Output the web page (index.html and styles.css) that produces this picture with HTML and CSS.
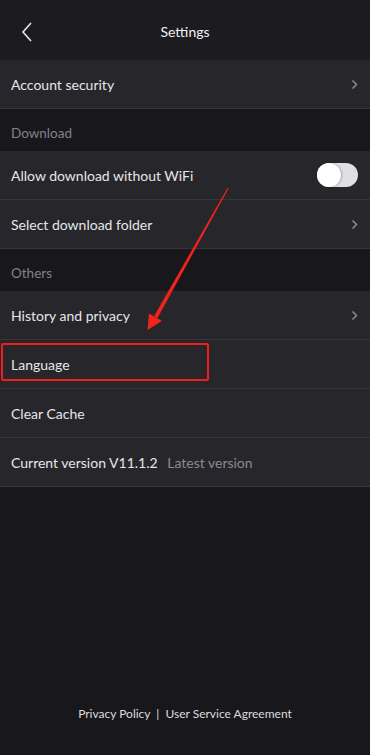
FILE: index.html
```html
<!DOCTYPE html>
<html lang="en">
<head>
  <meta charset="UTF-8" />
  <meta name="viewport" content="width=device-width, initial-scale=1.0"/>
  <title>Settings</title>
  <link rel="stylesheet" href="styles.css">
</head>
<body>
  <div class="page">
    <header class="topbar">
      <span class="back">
        <svg width="12" height="20" viewBox="0 0 12 20"><path d="M10 1 L2 10 L10 19" fill="none" stroke="#e6e6e8" stroke-width="1.6"/></svg>
      </span>
      <h1>Settings</h1>
    </header>

    <div class="row">
      <span>Account security</span>
      <svg class="chev" width="7" height="11" viewBox="0 0 7 11"><path d="M1.5 1.5 L5.5 5.5 L1.5 9.5" fill="none" stroke="#8e8d92" stroke-width="1.5"/></svg>
    </div>

    <div class="section">Download</div>
    <div class="row">
      <span>Allow download without WiFi</span>
      <span class="toggle"><span class="knob"></span></span>
    </div>
    <div class="row">
      <span>Select download folder</span>
      <svg class="chev" width="7" height="11" viewBox="0 0 7 11"><path d="M1.5 1.5 L5.5 5.5 L1.5 9.5" fill="none" stroke="#8e8d92" stroke-width="1.5"/></svg>
    </div>

    <div class="section">Others</div>
    <div class="row">
      <span>History and privacy</span>
      <svg class="chev" width="7" height="11" viewBox="0 0 7 11"><path d="M1.5 1.5 L5.5 5.5 L1.5 9.5" fill="none" stroke="#8e8d92" stroke-width="1.5"/></svg>
    </div>
    <div class="row highlight">
      <span>Language</span>
    </div>
    <div class="row">
      <span>Clear Cache</span>
    </div>
    <div class="row">
      <span>Current version V11.1.2 <span class="muted">Latest version</span></span>
    </div>

    <footer class="footer">
      Privacy Policy <span class="sep">|</span> User Service Agreement
    </footer>

    <svg class="arrow" width="370" height="340" viewBox="0 0 370 340">
      <polygon points="227.5,188 228.5,188.6 157.5,318 154,316.2" fill="#f2221c"/>
      <polygon points="147.5,330 149,313.5 162,321" fill="#f2221c"/>
    </svg>
  </div>
</body>
</html>
```

FILE: styles.css
```css
body {
  margin: 0;
  background: #18171c;
  font-family: 'Lato', 'Noto Sans', sans-serif;
  color: #e6e6e8;
}

.page {
  position: relative;
  width: 370px;
  height: 755px;
  display: flex;
  flex-direction: column;
}

.topbar {
  height: 60px;
  flex-shrink: 0;
  background: #1c1b20;
  display: flex;
  align-items: center;
  justify-content: center;
  position: relative;
}

.topbar h1 {
  margin: 2px 0 0;
  font-size: 14px;
  font-weight: 400;
  color: #f0f0f2;
}

.back {
  position: absolute;
  left: 21px;
  top: 22px;
  display: flex;
}

.row {
  height: 48px;
  flex-shrink: 0;
  background: #27262b;
  border-bottom: 1px solid #36353a;
  display: flex;
  align-items: center;
  justify-content: space-between;
  padding: 0 11px;
  font-size: 14px;
  position: relative;
}

.section {
  height: 42px;
  flex-shrink: 0;
  box-sizing: border-box;
  padding: 6px 11px 0;
  display: flex;
  align-items: center;
  font-size: 13.5px;
  color: #838288;
}

.chev {
  margin-right: 1px;
}

.muted {
  color: #8b8a90;
  margin-left: 6px;
}

.toggle {
  width: 41px;
  height: 24px;
  border-radius: 12px;
  background: #e0e0e2;
  position: relative;
  margin-right: 1px;
}

.knob {
  position: absolute;
  left: 0;
  top: 0;
  width: 24px;
  height: 24px;
  border-radius: 50%;
  background: #ffffff;
  box-shadow: 1px 0 2px rgba(0, 0, 0, 0.25);
}

.highlight::after {
  content: "";
  position: absolute;
  left: 1px;
  top: 3px;
  width: 204px;
  height: 34px;
  border: 2px solid #ee1f1c;
  border-radius: 2px;
}

.footer {
  margin-top: auto;
  margin-bottom: 34px;
  text-align: center;
  font-size: 12px;
  color: #dcdcde;
}

.sep {
  margin: 0 3px;
}

.arrow {
  position: absolute;
  left: 0;
  top: 0;
  pointer-events: none;
}
```
